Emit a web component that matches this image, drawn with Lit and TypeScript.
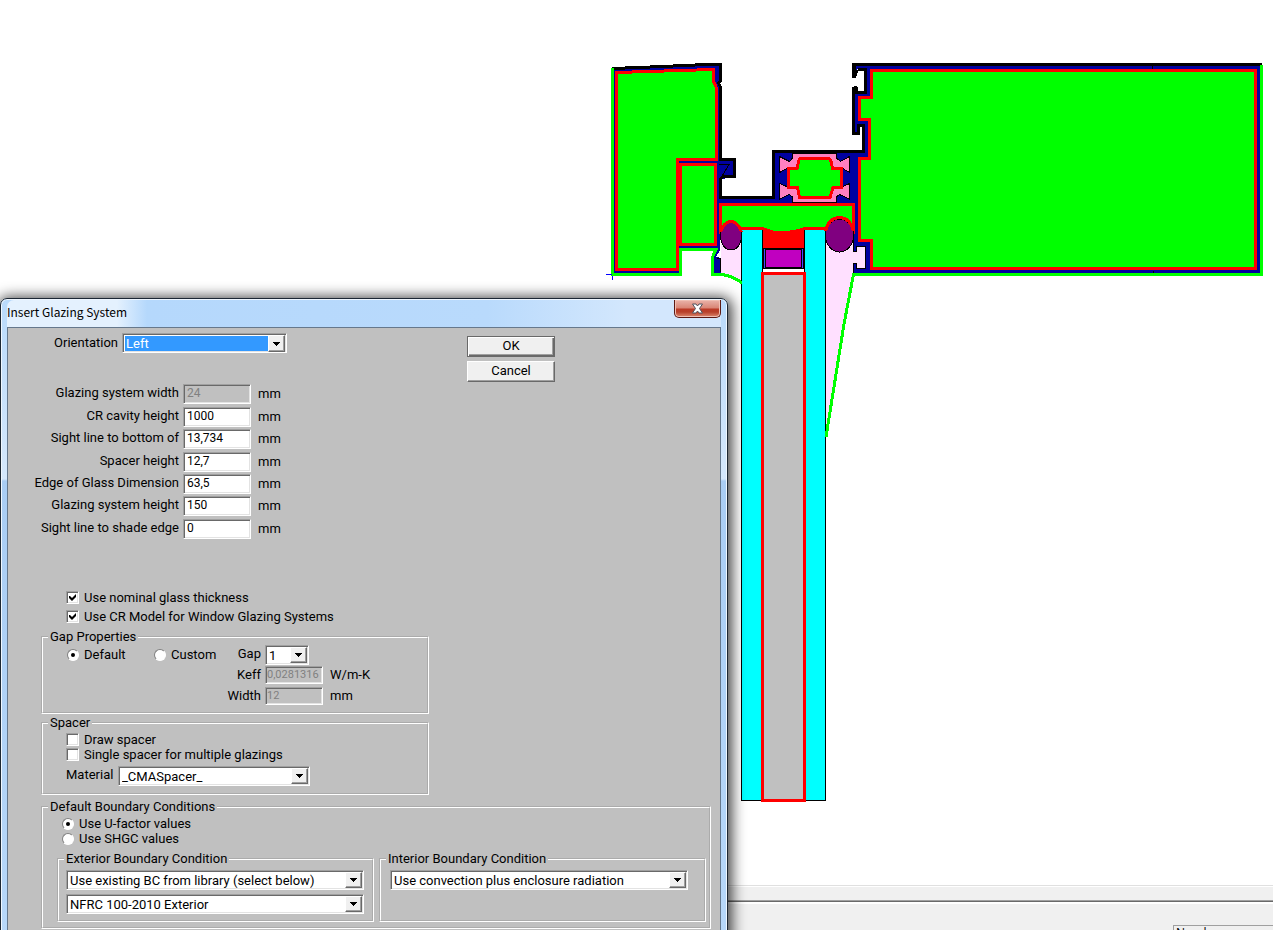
import { LitElement, html, svg, css } from "lit";
import { customElement, property } from "lit/decorators.js";

const bevel = css`
  .sunken {
    box-sizing: border-box;
    border: 1px solid;
    border-color: #a0a0a0 #fff #fff #a0a0a0;
    box-shadow: inset 1px 1px #696969, inset -1px -1px #e3e3e3;
    background: #fff;
  }
`;

@customElement("combo-box")
class ComboBox extends LitElement {
  @property() label = "";
  @property() value = "";
  @property({ type: Boolean }) active = false;
  static styles = [
    bevel,
    css`
      :host { display: block; height: 20px; }
      .box { display: grid; grid-template-columns: minmax(0, 1fr) 17px; height: 20px; padding: 1px; }
      select {
        grid-area: 1 / 1 / 2 / 3; appearance: none; border: 0; margin: 0; outline: 0; min-width: 0;
        background: transparent; padding: 0 20px 0 2px; border-radius: 0;
        font: 13px Roboto, sans-serif; line-height: 15px; color: #000;
      }
      .active select { background: #39f; color: #fff; margin: 1px 17px 1px 1px; padding: 0 0 0 1px; }
      .arrow {
        grid-area: 1 / 2; box-sizing: border-box; pointer-events: none; background: #f0f0f0;
        border: 1px solid; border-color: #fff #696969 #696969 #fff; box-shadow: inset -1px -1px #a0a0a0;
        display: grid; place-items: center;
      }
    `,
  ];
  render() {
    return html`<div class="box sunken ${this.active ? "active" : ""}">
      <select aria-label=${this.label}><option>${this.value}</option></select>
      <span class="arrow"><svg width="7" height="4" shape-rendering="crispEdges"><path d="M0 0H7V1H6V2H5V3H4V4H3V3H2V2H1V1H0Z"/></svg></span>
    </div>`;
  }
}

@customElement("frame-drawing")
class FrameDrawing extends LitElement {
  static styles = css`
    :host { display: block; min-height: 0; }
    svg { display: block; width: 100%; height: 100%; overflow: visible; }
    .navy { fill: #0000a0; }
    .solid { fill: #0f0; stroke: #f00; stroke-width: 3; }
    .red { fill: none; stroke: #f00; stroke-width: 3; }
    .metal { fill: none; stroke: #000; stroke-width: 3; }
    .edge { fill: none; stroke: #0f0; stroke-width: 3; }
    .thin { fill: none; stroke: #000; stroke-width: 1; }
    .gasket { fill: #ffe0ff; }
    .poly { fill: #ff80c0; stroke: #000; stroke-width: 1; }
    .glass { fill: #0ff; stroke: #000; stroke-width: 1; }
    .bead { fill: #800080; stroke: #000; stroke-width: 1; }
  `;
  render() {
    return html`<svg shape-rendering="crispEdges" role="img" aria-label="Window frame cross section">${svg`
      <path class="gasket" d="M721 235H742V283L733 277L721 274ZM826 230H867V268L853 274L826 437Z"/>
      <path class="navy" d="M614 68L706 65H721V82L719 84L721 87V159H735V177L722 179V204H720V250L716 257L721 258V273H714V255L716 249H680V273H614Z"/>
      <path class="navy" d="M721 206V197H773V152H863V127H859V134H853V93H866V69H857V76H853V64H1261V273H853V263H857V268H866V246H857V252H853V206Z"/>
      <path class="thin" d="M853.5 273V263.5H856.5V268.5H865.5V246.5H856.5V251.5H853.5V240M720.5 272V258.5H717M719 164.5H729L721 178M1152.5 66V69M1153.5 271V273"/>
      <path class="solid" d="M616.5 72.5L648 71.5L713 69.5V80L716.5 88V159.5H677.5V269.5H616.5Z"/>
      <rect class="solid" x="680.5" y="164.5" width="35" height="80"/>
      <path class="solid" d="M871.5 70.5H1255.5V268.5H871.5V240.5H859.5V158.5H869.5V119.5H859.5V97.5H871.5Z"/>
      <path d="M720 204H854V231H720Z" fill="#0f0"/>
      <path class="red" d="M720.5 234V204.5H853.5V234"/>
      <path fill="#f00" d="M763 227L774 231L790 230L804 227V248H763Z"/>
      <path fill="#0f0" d="M761 206H806V227H804Q794 231 782 231Q770 230 762 227H761Z"/>
      <rect class="glass" x="741.5" y="228.5" width="21" height="572"/>
      <rect class="glass" x="804.5" y="228.5" width="21" height="572"/>
      <path class="red" d="M741 228.5H762Q770 232 776 232.5H788Q797 232 804 228.5H826"/>
      <ellipse class="bead" cx="731" cy="236" rx="10.5" ry="14"/>
      <ellipse class="bead" cx="839.5" cy="235.5" rx="14" ry="16.5"/>
      <path class="red" d="M720.5 232Q724 221.5 731 221.5T741.5 232M825.5 231Q829 217.5 839.5 217.5T853.5 231"/>
      <rect x="763" y="248" width="41" height="21" fill="#000"/>
      <rect x="764" y="249" width="39" height="19" fill="#4848ff"/>
      <rect x="765" y="249" width="37" height="19" fill="#000"/>
      <rect x="766" y="250" width="35" height="17" fill="#c000c0"/>
      <rect x="763" y="269" width="41" height="3" fill="#fff"/>
      <rect x="762.5" y="273.5" width="42" height="527" fill="#c0c0c0" stroke="#f00" stroke-width="3"/>
      <path class="poly" d="M779.5 156.5L789.5 161.5L792.5 158V153.5H836.5V158L840.5 161.5L849.5 156.5V172.5L842 168V187L849.5 183.5V199L839.5 194.5L836.5 197V202.5H792.5V197L789.5 194.5L779.5 199V183.5L788 187V168L779.5 172.5Z"/>
      <path class="solid" d="M800 158.5H829L831 161L832.5 168.5H841.5V187.5H833L830 197.5H799.5L797.5 187.5H788.5V168.5H797L799 160Z"/>
      <path class="metal" d="M612 68.5L638 67.5L662 66.5L706 64.5H720.5V81L718.5 83L720.5 87V159.5H734.5V176.5H723L720.5 179V197.5H773.5V151.5H863.5V125.5H858.5V133.5H853.5V88H855M853 92.5H865.5V69.5H858M856 76H853.5V64.5H1262"/>
      <path fill="#000" d="M852 66H856V70H858V71L857 76L855 77H852ZM852 88L854 86H856L858 88V93H852Z"/>
      <path class="edge" d="M612.5 68V274.5H680.5V249.5H716L712.5 257V274.5H722Q733 276 742 283M1261.5 65V274.5H853.5L844 324L826 437"/>
      <path fill="none" stroke="#00f" d="M606 274.5H612M612.5 276V280"/>
    `}</svg>`;
  }
}

const dimensions = [
  { id: "gw", label: "Glazing system width", value: "24", off: true, more: false },
  { id: "cr", label: "CR cavity height", value: "1000", off: false, more: true },
  { id: "sl", label: "Sight line to bottom of", value: "13,734", off: false, more: false },
  { id: "sh", label: "Spacer height", value: "12,7", off: false, more: true },
  { id: "eg", label: "Edge of Glass Dimension", value: "63,5", off: false, more: false },
  { id: "gh", label: "Glazing system height", value: "150", off: false, more: false },
  { id: "se", label: "Sight line to shade edge", value: "0", off: false, more: true },
];

@customElement("app-root")
class AppRoot extends LitElement {
  static styles = [
    bevel,
    css`
      :host {
        display: grid; grid-template-rows: minmax(0, 1fr) 45px; position: relative; height: 100vh; overflow: hidden;
        background: #fff; color: #000; font: 13px/14px Roboto, sans-serif;
      }
      .status { background: #f0f0f0; border-top: 1px solid #e0e0e0; box-sizing: border-box; display: flex; flex-direction: column; min-height: 0; }
      .rule { flex: none; height: 13px; border-top: 1px solid #fff; border-bottom: 1px solid #a0a0a0; box-shadow: 0 1px #696969, 0 3px #fff; }
      .help { flex: none; align-self: flex-end; width: 100px; height: 20px; margin-top: 24px; border: 1px solid #a0a0a0; border-right: 0; box-sizing: border-box; padding: 0 2px; font: 12px/14px "Open Sans", sans-serif; }
      .dialog {
        position: absolute; left: 0; top: 298px; width: 728px; height: 700px; box-sizing: border-box;
        border: 1px solid #1c2733; border-radius: 7px 7px 0 0; padding: 0 6px 6px;
        background: linear-gradient(#b9dafb, #d5e8fc 180px, #a9cdf4 182px, #b9d9fa);
        box-shadow: inset 0 0 0 1px #eff7ff, 1px 2px 14px 3px rgba(0, 0, 0, 0.75);
      }
      .title { display: flex; justify-content: space-between; height: 27px; border-radius: 7px 7px 0 0; margin: 1px 0 0; background: linear-gradient(90deg, #e4f1fe, #e4f1fe 110px, #b5d8fc 140px, #b9dafc 480px, #d3e7fd 620px); }
      .title h1 { margin: 5px 0 0; font: 12px/14px "Noto Sans CJK KR", sans-serif; }
      .close { width: 47px; height: 18px; padding: 0 0 1px; border: 1px solid #5c1a14; border-top: 0; border-radius: 0 0 5px 5px; background: linear-gradient(#eab4aa, #d98575 8px, #bb3a26 9px, #b8412b 12px, #dd8a70); box-shadow: inset 0 0 0 1px #f0c0b4; display: grid; place-items: center; }
      .panel { box-sizing: border-box; border: 1px solid #66788c; background: #c0c0c0; height: 660px; padding: 5px 9px 0 33px; }
      .head { display: flex; }
      .head .name { width: 77px; text-align: right; margin-top: 3px; }
      .head .orient { width: 165px; margin-left: 4px; }
      .buttons { display: grid; gap: 4px; margin: 3px 0 0 180px; }
      .push { width: 88px; height: 21px; padding: 0 0 2px; background: #f0f0f0; border: 1px solid; border-color: #fff #696969 #696969 #fff; box-shadow: inset -1px -1px #a0a0a0; font: inherit; color: #000; }
      .first { border-color: #696969; box-shadow: inset 1px 1px #fff, inset -1px -1px #696969, inset -2px -2px #a0a0a0; }
      .fields { display: grid; gap: 2px; margin: 2px 0 0 -20px; }
      .field { display: grid; grid-template-columns: 158px 68px 30px; column-gap: 4px; align-items: start; }
      .field .name { text-align: right; margin-top: 2px; }
      .field .unit { margin: 3px 0 0 3px; }
      .more { margin-top: 1px; }
      input.sunken { width: 100%; height: 20px; margin: 0; padding: 0 3px 3px; border-radius: 0; outline: 0; font: 12px Roboto, sans-serif; color: #000; }
      input.sunken:disabled { background: #c0c0c0; color: #808080; }
      .option { display: flex; align-items: center; gap: 5px; height: 15px; }
      .option input { appearance: none; flex: none; margin: 0; }
      .option input.tick { width: 13px; height: 13px; padding: 0; display: grid; place-items: center; }
      .tick:checked::before { content: ""; width: 7px; height: 7px; background: #000; clip-path: polygon(0 2px, 1px 2px, 3px 4px, 7px 0, 7px 3px, 3px 7px, 0 4px); }
      .dot { width: 12px; height: 12px; border-radius: 50%; border: 1px solid; border-color: #808080 #fff #fff #808080; background: #fff; box-sizing: border-box; display: grid; place-items: center; }
      .dot:checked::before { content: ""; width: 4px; height: 4px; border-radius: 50%; background: #000; }
      .general { margin: 51px 0 0 25px; display: grid; gap: 4px; }
      fieldset { box-sizing: border-box; margin: 0; min-width: 0; border: 2px groove #fff; padding: 0; }
      legend { margin-left: 5px; padding: 0 2px; line-height: 14px; }
      .gap { width: 388px; height: 84px; margin-top: 6px; display: grid; }
      .gaprow { display: grid; grid-template-columns: 87px 80px 31px 58px auto; padding-left: 24px; align-items: start; }
      .gaprow .name { text-align: right; padding-right: 4px; margin-top: 2px; }
      .gaprow .unit { margin: 2px 0 0 7px; }
      .gaprow .option { margin-top: 2px; }
      .gaprow combo-box { width: 44px; }
      .gaprow input.sunken { height: 18px; padding: 0 1px 1px; font-size: 11px; }
      .gaprow .name.k { grid-column: 1 / 4; }
      .lines { display: grid; grid-template-rows: 21px 21px 20px; align-content: start; margin-top: 1px; }
      .spacer { width: 388px; height: 79px; margin-top: 2px; }
      .spacer .option { margin-left: 23px; }
      .choices { margin-top: 2px; }
      .material { display: flex; margin: 4px 0 0 23px; }
      .material .name { margin-top: 2px; width: 52px; }
      .material combo-box { width: 192px; }
      .bounds { height: 129px; margin-top: 5px; }
      .bounds .radios { margin: 2px 0 0 19px; }
      .pair { display: grid; grid-template-columns: 317fr 327fr; gap: 5px; margin: 6px 3px 0 14px; }
      .pair fieldset { height: 70px; }
      .stack { display: grid; gap: 4px; margin: 4px 8px 0 7px; }
      .inner { margin: 4px 16px 0 9px; }
    `,
  ];
  render() {
    return html`
      <frame-drawing></frame-drawing>
      <footer class="status"><div class="rule"></div><div class="help">Number</div></footer>
      <section class="dialog" role="dialog" aria-labelledby="title">
        <header class="title">
          <h1 id="title">Insert Glazing System</h1>
          <button class="close" aria-label="Close"><svg width="13" height="11"><path d="M1.500 1H5L6.500 3L8 1H11.500L8.500 5.500L11.500 10H8L6.500 8L5 10H1.500L4.500 5.500Z" fill="#fff" stroke="#53545e"/></svg></button>
        </header>
        <form class="panel" @submit=${(e: Event) => e.preventDefault()}>
          <div class="head">
            <span class="name">Orientation</span>
            <combo-box class="orient" label="Orientation" value="Left" active></combo-box>
            <div class="buttons"><button class="push first">OK</button><button class="push" type="button">Cancel</button></div>
          </div>
          <div class="fields">
            ${dimensions.map((d) => html`<div class="field ${d.more ? "more" : ""}">
              <label class="name" for=${d.id}>${d.label}</label>
              <input class="sunken" id=${d.id} .value=${d.value} ?disabled=${d.off} />
              <span class="unit">mm</span>
            </div>`)}
          </div>
          <div class="general">
            <label class="option"><input class="tick sunken" type="checkbox" checked />Use nominal glass thickness</label>
            <label class="option"><input class="tick sunken" type="checkbox" checked />Use CR Model for Window Glazing Systems</label>
          </div>
          <fieldset class="gap">
            <legend>Gap Properties</legend>
            <div class="lines">
              <div class="gaprow">
                <label class="option"><input class="dot" type="radio" name="gap" checked />Default</label>
                <label class="option"><input class="dot" type="radio" name="gap" />Custom</label>
                <span class="name">Gap</span><combo-box label="Gap" value="1"></combo-box>
              </div>
              <div class="gaprow"><label class="name k" for="keff">Keff</label><input class="sunken" id="keff" .value=${"0,0281316"} disabled /><span class="unit">W/m-K</span></div>
              <div class="gaprow"><label class="name k" for="width">Width</label><input class="sunken" id="width" .value=${"12"} disabled /><span class="unit">mm</span></div>
            </div>
          </fieldset>
          <fieldset class="spacer">
            <legend>Spacer</legend>
            <div class="choices">
              <label class="option"><input class="tick sunken" type="checkbox" />Draw spacer</label>
              <label class="option"><input class="tick sunken" type="checkbox" />Single spacer for multiple glazings</label>
            </div>
            <div class="material"><span class="name">Material</span><combo-box label="Material" value="_CMASpacer_"></combo-box></div>
          </fieldset>
          <fieldset class="bounds">
            <legend>Default Boundary Conditions</legend>
            <div class="radios">
              <label class="option"><input class="dot" type="radio" name="bc" checked />Use U-factor values</label>
              <label class="option"><input class="dot" type="radio" name="bc" />Use SHGC values</label>
            </div>
            <div class="pair">
              <fieldset><legend>Exterior Boundary Condition</legend><div class="stack">
                <combo-box label="Exterior boundary model" value="Use existing BC from library (select below)"></combo-box>
                <combo-box label="Exterior boundary condition" value="NFRC 100-2010 Exterior"></combo-box>
              </div></fieldset>
              <fieldset><legend>Interior Boundary Condition</legend><div class="inner">
                <combo-box label="Interior boundary model" value="Use convection plus enclosure radiation"></combo-box>
              </div></fieldset>
            </div>
          </fieldset>
        </form>
      </section>
    `;
  }
}
